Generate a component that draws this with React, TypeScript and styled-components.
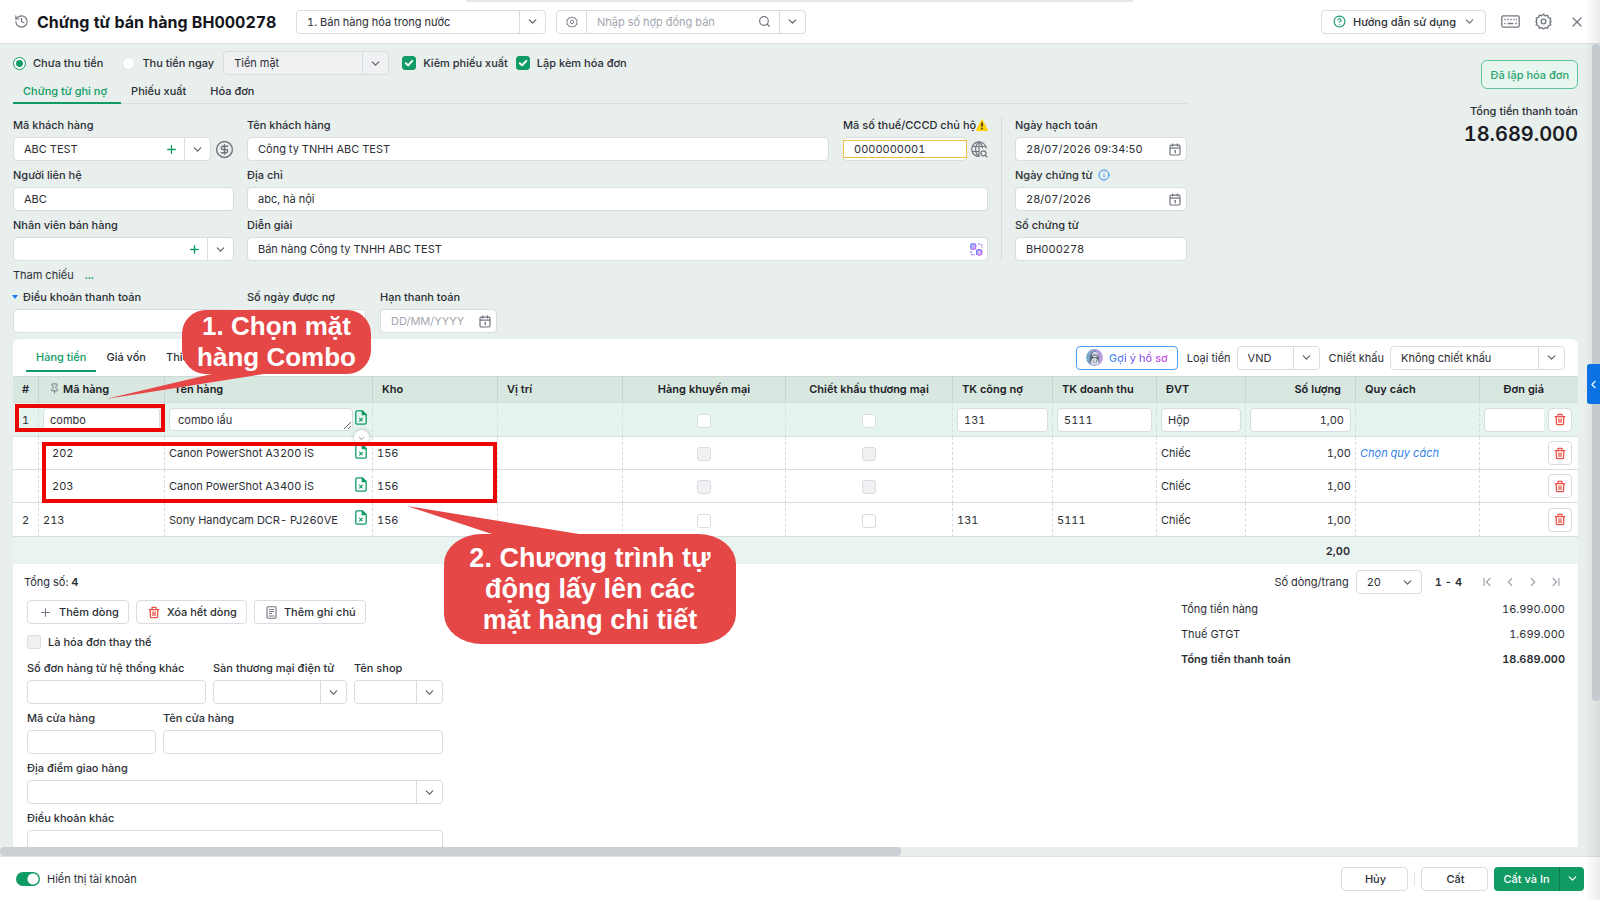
import React from 'react';
import styled, { createGlobalStyle, css } from 'styled-components';
import {
  ChevronDown,
  ChevronFirst,
  ChevronLast,
  ChevronLeft,
  ChevronRight,
  CircleDollarSign,
  CircleHelp,
  History,
  Info,
  Pin,
  Plus,
  Search,
  X,
} from 'lucide-react';

const GREEN = '#0f9b63';
const LINE = '#d9dce0';
const GREY = '#70757f';

const GlobalStyle = createGlobalStyle`
  * { box-sizing: border-box; }
  body {
    margin: 0;
    overflow: hidden;
    font-family: Inter, "Liberation Sans", sans-serif;
    font-size: 11px;
    line-height: 16px;
    color: #2b2e35;
    font-variant-numeric: tabular-nums;
  }
  button, input, select, textarea {
    font: inherit;
    font-variant-numeric: inherit;
    color: inherit;
    margin: 0;
  }
  button { cursor: pointer; }
  svg { display: block; flex: none; }
`;

/* ---------- page frame ---------- */

const Page = styled.div`
  position: relative;
  display: flex;
  flex-direction: column;
  height: 100vh;
  background: #e8efec;
`;

const Header = styled.header`
  display: flex;
  align-items: center;
  height: 44px;
  flex: none;
  padding: 0 15px 0 14px;
  background: #fff;
  border-bottom: 1px solid #dde2e1;
`;

const Title = styled.h1`
  margin: 0 17px 0 8px;
  min-width: 242px;
  font-size: 16px;
  line-height: 24px;
  font-weight: 700;
  color: #14171d;
  white-space: nowrap;
`;

const HeaderTools = styled.div`
  display: flex;
  align-items: center;
  gap: 15px;
  margin-left: auto;
`;

const IconButton = styled.button<{ $color?: string }>`
  display: flex;
  align-items: center;
  justify-content: center;
  padding: 0;
  border: 0;
  background: none;
  color: ${(p) => p.$color || GREY};
`;

const Body = styled.main`
  flex: 1;
  min-height: 0;
  overflow: hidden;
  padding: 7px 22px 0 13px;
  display: flex;
  flex-direction: column;
  margin-bottom: 9px;
`;

const Footer = styled.footer`
  display: flex;
  align-items: center;
  flex: none;
  height: 44px;
  padding: 0 16px;
  background: #fff;
  border-top: 1px solid #dde2e1;
`;

const TopArea = styled.div`
  display: flex;
  justify-content: space-between;
  flex: none;
`;

const FormArea = styled.div`
  flex: 0 1 1174px;
`;

const Summary = styled.div`
  display: flex;
  flex-direction: column;
  align-items: flex-end;
  padding-top: 9px;
`;

const StatusBadge = styled.button`
  height: 29px;
  padding: 0 8px;
  border: 1px solid #5cc596;
  border-radius: 6px;
  background: #e8f6ef;
  color: #2aa56f;
  font-weight: 500;
`;

const SummaryLabel = styled.div`
  margin-top: 14px;
  font-weight: 500;
`;

const SummaryAmount = styled.div`
  margin-top: 1px;
  font-size: 20px;
  line-height: 28px;
  font-weight: 600;
  color: #1a1d24;
`;

/* ---------- form controls ---------- */

const Control = styled.div<{ $w?: number; $muted?: boolean }>`
  display: flex;
  align-items: stretch;
  height: 24px;
  ${(p) => (p.$w ? css`width: ${p.$w}px; flex: none;` : css`flex: 1; min-width: 0;`)}
  border: 1px solid ${LINE};
  border-radius: 4px;
  background: ${(p) => (p.$muted ? '#f0f1f2' : '#fff')};
  overflow: hidden;
`;

const TextInput = styled.input`
  flex: 1;
  width: 0;
  min-width: 0;
  padding: 0 0 0 10px;
  border: 0;
  background: transparent;
  outline: none;
  &::placeholder { color: #a3a7af; opacity: 1; }
`;

const NativeSelect = styled.select`
  flex: 1;
  width: 0;
  min-width: 0;
  padding: 0 10px;
  border: 0;
  appearance: none;
  background: transparent;
  outline: none;
`;

const Arrow = styled.span<{ $plain?: boolean }>`
  display: flex;
  align-items: center;
  justify-content: center;
  width: 26px;
  flex: none;
  color: #5f646d;
  border-left: ${(p) => (p.$plain ? '0' : `1px solid ${LINE}`)};
`;

const Leading = styled(IconButton)`
  width: 30px;
  border-right: 1px solid ${LINE};
`;

const Inner = styled(IconButton)<{ $w?: number }>`
  width: ${(p) => p.$w || 22}px;
  flex: none;
`;

const WarnFrame = styled.div`
  display: flex;
  align-items: center;
  width: 124px;
  height: 24px;
  border: 1px solid ${LINE};
  border-radius: 4px;
  background: #fff;
  & > input {
    height: 18px;
    margin: 0 -1px;
    border: 1px solid #f3c14b;
  }
`;

const FieldBox = styled.div<{ $w?: number }>`
  ${(p) => (p.$w ? css`width: ${p.$w}px; flex: none;` : css`flex: 1; min-width: 0;`)}
`;

const LabelRow = styled.div`
  display: flex;
  align-items: center;
  gap: 5px;
  height: 16px;
  margin-bottom: 4px;
  white-space: nowrap;
  font-weight: 500;
`;

const ControlRow = styled.div`
  display: flex;
  align-items: center;
  gap: 4px;
`;

const FieldRow = styled.div<{ $gap?: number }>`
  display: flex;
  gap: ${(p) => p.$gap || 14}px;
`;

const Stack = styled.div<{ $w?: number }>`
  display: flex;
  flex-direction: column;
  gap: 6px;
  ${(p) => (p.$w ? css`width: ${p.$w}px; flex: none;` : css`flex: 1; min-width: 0;`)}
`;

const FormColumns = styled.div`
  display: flex;
  gap: 13px;
  padding-top: 13px;
`;

const Rule = styled.div`
  width: 1px;
  background: ${LINE};
`;

const Options = styled.div`
  display: flex;
  align-items: center;
  height: 24px;
`;

const Choice = styled.label<{ $mr?: number }>`
  display: flex;
  align-items: center;
  gap: 7px;
  margin-right: ${(p) => p.$mr || 0}px;
  font-weight: 500;
  white-space: nowrap;
`;

const Radio = styled.input.attrs({ type: 'radio' })`
  appearance: none;
  width: 13px;
  height: 13px;
  border-radius: 50%;
  border: 1px solid #e0e3e5;
  background: #fff;
  &:checked {
    border-color: ${GREEN};
    background: radial-gradient(circle, ${GREEN} 0 3px, #fff 4px);
  }
`;

const tick =
  "url(\"data:image/svg+xml,%3Csvg xmlns='http://www.w3.org/2000/svg' viewBox='0 0 14 14' fill='none' stroke='white' stroke-width='2' stroke-linecap='round' stroke-linejoin='round'%3E%3Cpath d='M3.8 7.2l2.3 2.2 4.2-4.5'/%3E%3C/svg%3E\")";

const Check = styled.input.attrs({ type: 'checkbox' })`
  appearance: none;
  display: inline-block;
  vertical-align: middle;
  width: 14px;
  height: 14px;
  border-radius: 3px;
  border: 1px solid ${LINE};
  background: #fff;
  &:disabled { background: #f0f1f3; }
  &:checked {
    border-color: ${GREEN};
    background: ${GREEN} ${tick} center / 14px no-repeat;
  }
`;

const LeadCheck = styled(Check)`
  margin-left: 13px;
`;

const TabBar = styled.div`
  display: flex;
  height: 24px;
  margin-top: 5px;
  border-bottom: 1px solid ${LINE};
`;

const Tab = styled.button<{ $active?: boolean }>`
  height: 24px;
  padding: 0 14px 0 10px;
  border: 0;
  border-bottom: 2px solid ${(p) => (p.$active ? GREEN : 'transparent')};
  background: none;
  font-weight: 500;
  color: ${(p) => (p.$active ? GREEN : 'inherit')};
`;

const Reference = styled.div`
  display: flex;
  gap: 11px;
  margin-top: 6px;
  a { color: ${GREEN}; font-weight: 700; text-decoration: none; }
`;

const Triangle = styled.span`
  margin-left: -1px;
  border: 3px solid transparent;
  border-top: 4px solid #1b7cf0;
  border-bottom: 0;
`;

/* ---------- detail panel ---------- */

const Panel = styled.section`
  flex: 1;
  min-height: 0;
  margin-top: 6px;
  border-radius: 6px 6px 0 0;
  background: #fff;
  overflow: hidden;
`;

const PanelBar = styled.div`
  display: flex;
  align-items: center;
  height: 37px;
  padding: 0 13px;
  font-weight: 400;
`;

const PanelTab = styled(Tab)`
  height: 28px;
  padding: 0 10px;
  align-self: flex-start;
  margin-top: 5px;
`;

const PanelTools = styled.div`
  display: flex;
  align-items: center;
  gap: 6px;
  margin-left: auto;
  label { margin-left: 3px; }
`;

const HintButton = styled.button`
  display: flex;
  align-items: center;
  gap: 6px;
  height: 24px;
  padding: 0 9px;
  border: 1px solid #4f9df5;
  border-radius: 4px;
  background: #fff;
  font-weight: 500;
  span {
    background: linear-gradient(90deg, #3a8cf2, #8a5cf0 55%, #d63ce6);
    -webkit-background-clip: text;
    background-clip: text;
    color: transparent;
  }
`;

const Grid = styled.table`
  width: 100%;
  table-layout: fixed;
  border-collapse: separate;
  border-spacing: 0;
`;

const Th = styled.th<{ $align?: string; $open?: boolean; $pad?: number }>`
  height: 27px;
  padding: 0 ${(p) => p.$pad ?? 9}px 2px 9px;
  border-top: 1px solid #cfdad6;
  border-bottom: 1px solid #d3dad8;
  border-right: ${(p) => (p.$open ? '0' : '1px solid #c9d3d0')};
  background: #d8e7e0;
  color: #1d2026;
  font-weight: 600;
  text-align: ${(p) => p.$align || 'left'};
  white-space: nowrap;
`;

const Pinned = styled.span`
  display: flex;
  align-items: center;
  gap: 3px;
  padding-left: 1px;
`;

const Td = styled.td<{ $align?: string; $indent?: boolean; $open?: boolean; $flush?: boolean }>`
  padding: 0 ${(p) => (p.$flush ? 0 : 4)}px 0 ${(p) => (p.$indent ? 13 : 4)}px;
  border-bottom: 1px solid ${LINE};
  border-right: ${(p) => (p.$open ? '0' : `1px dashed ${LINE}`)};
  text-align: ${(p) => p.$align || 'left'};
  white-space: nowrap;
`;

const Tr = styled.tr<{ $active?: boolean; $child?: boolean }>`
  height: ${(p) => (p.$child ? 33 : 34)}px;
  background: ${(p) => (p.$active ? '#e5f4ee' : '#fff')};
`;

const FootTd = styled.td`
  height: 27px;
  padding: 0 6px;
  background: #e9f3ef;
  font-weight: 600;
  text-align: right;
`;

const CellInput = styled.input<{ $right?: boolean; $cut?: boolean }>`
  display: block;
  width: 100%;
  height: 24px;
  padding: 0 6px;
  border: 1px solid ${LINE};
  border-radius: ${(p) => (p.$cut ? '4px 0 0 4px' : '4px')};
  border-right-width: ${(p) => (p.$cut ? 0 : 1)}px;
  background: #fff;
  text-align: ${(p) => (p.$right ? 'right' : 'left')};
`;

const NameCell = styled.div`
  display: flex;
  align-items: center;
  justify-content: space-between;
  gap: 2px;
  position: relative;
`;

const CellArea = styled.textarea`
  flex: 1;
  min-width: 0;
  height: 23px;
  padding: 3px 8px;
  border: 1px solid ${LINE};
  border-radius: 4px;
  background: #fff;
  resize: vertical;
  overflow: hidden;
`;

const Expander = styled.button`
  position: absolute;
  right: -1px;
  top: 22px;
  display: flex;
  justify-content: center;
  width: 15px;
  height: 15px;
  padding: 4px 0 0;
  border: 0;
  border-radius: 50%;
  background: #fff;
  color: ${GREY};
  box-shadow: 0 0 4px rgba(0, 0, 0, 0.25);
`;

const FileButton = styled(IconButton)`
  color: ${GREEN};
  margin: 0 1px 4px 0;
`;

const DeleteButton = styled(IconButton)`
  width: 24px;
  height: 24px;
  border: 1px solid ${LINE};
  border-radius: 4px;
  background: #fff;
  color: #ee5248;
`;

const SpecLink = styled.a`
  color: #2f80ed;
  font-style: italic;
  text-decoration: none;
`;

const Paging = styled.div`
  display: flex;
  align-items: center;
  gap: 7px;
  height: 36px;
  padding: 0 14px 0 11px;
  b { font-weight: 600; }
`;

const Spacer = styled.div`
  flex: 1;
`;

const PageRange = styled.b`
  margin: 0 10px 0 6px;
`;

const PageButton = styled(IconButton)`
  width: 16px;
  color: #a0a4ac;
`;

const Bottom = styled.div`
  display: flex;
  justify-content: space-between;
  padding: 0 13px 0 14px;
`;

const Actions = styled.div`
  display: flex;
  gap: 7px;
`;

const Button = styled.button<{ $w?: number }>`
  display: flex;
  align-items: center;
  justify-content: center;
  gap: 7px;
  height: 24px;
  padding: 0 9px 0 11px;
  min-width: ${(p) => p.$w || 0}px;
  border: 1px solid ${LINE};
  border-radius: 4px;
  background: #fff;
  font-weight: 500;
  white-space: nowrap;
  color: #2b2e35;
  svg { color: ${GREY}; }
`;

const RedIcon = styled.span`
  && svg { color: #ee5248; }
`;

const ReplaceRow = styled.div`
  display: flex;
  margin: 1px 0;
  height: 22px;
`;

const Totals = styled.dl`
  flex: 0 1 384px;
  margin: -4px 0 0;
`;

const TotalRow = styled.div<{ $strong?: boolean }>`
  display: flex;
  justify-content: space-between;
  align-items: center;
  height: 25px;
  font-weight: ${(p) => (p.$strong ? 600 : 400)};
  dd { margin: 0; }
`;

/* ---------- footer ---------- */

const FooterChoice = styled(Choice)`
  font-weight: 400;
`;

const Switch = styled.input.attrs({ type: 'checkbox', role: 'switch' })`
  appearance: none;
  width: 24px;
  height: 14px;
  border-radius: 7px;
  background: radial-gradient(circle at 17px 7px, #fff 0 5px, ${GREEN} 6px);
`;

const FooterActions = styled.div`
  display: flex;
  align-items: center;
  gap: 6px;
  margin-left: auto;
`;

const ShortRule = styled.span`
  width: 1px;
  height: 14px;
  background: #e2e4e7;
`;

const SplitButton = styled.div`
  display: flex;
  height: 24px;
  border-radius: 4px;
  background: ${GREEN};
  overflow: hidden;
  button {
    display: flex;
    align-items: center;
    justify-content: center;
    padding: 0;
    border: 0;
    background: none;
    color: #fff;
    font-weight: 500;
    min-width: 65px;
  }
  button + button {
    min-width: 25px;
    border-left: 1px solid #0c7d50;
  }
`;

/* ---------- overlays ---------- */

const VScroll = styled.div`
  position: absolute;
  right: 0;
  top: 44px;
  width: 8px;
  height: 73%;
  border-radius: 4px;
  background: #c5cace;
`;

const HScroll = styled.div`
  position: absolute;
  left: 0;
  bottom: 44px;
  width: 56.3%;
  height: 9px;
  border-radius: 4px;
  background: #cbd0d5;
`;

const EdgeShade = styled.div`
  position: absolute;
  inset: 0 0 0 auto;
  width: 16px;
  background: linear-gradient(90deg, rgba(0, 0, 0, 0), rgba(0, 0, 0, 0.07));
  pointer-events: none;
`;

const TopStrip = styled.div`
  position: absolute;
  top: 0;
  left: 466px;
  width: 667px;
  height: 2px;
  background: #e6e7e8;
`;

const SideHandle = styled.button`
  position: absolute;
  right: 0;
  top: 364px;
  display: flex;
  align-items: center;
  justify-content: center;
  width: 13px;
  height: 40px;
  padding: 0;
  border: 0;
  border-radius: 3px 0 0 3px;
  background: #0b72e3;
  color: #fff;
`;

const Mark = styled.div<{ $x: number; $y: number; $w: number; $h: number }>`
  position: absolute;
  left: ${(p) => p.$x}px;
  top: ${(p) => p.$y}px;
  width: ${(p) => p.$w}px;
  height: ${(p) => p.$h}px;
  border: 4px solid #eb0505;
  pointer-events: none;
`;

const Callout = styled.div<{ $x: number; $y: number; $w: number; $h: number; $r: string; $size: number }>`
  position: absolute;
  left: ${(p) => p.$x}px;
  top: ${(p) => p.$y}px;
  width: ${(p) => p.$w}px;
  height: ${(p) => p.$h}px;
  display: flex;
  align-items: center;
  justify-content: center;
  border-radius: ${(p) => p.$r};
  background: #e54646;
  color: #fff;
  font: bold ${(p) => p.$size}px/31px "Liberation Sans", Arial, sans-serif;
  text-align: center;
  white-space: nowrap;
`;

const Tail = styled.svg<{ $x: number; $y: number }>`
  position: absolute;
  left: ${(p) => p.$x}px;
  top: ${(p) => p.$y}px;
  fill: #e54646;
`;

/* ---------- icons ---------- */

const Down = () => <ChevronDown size={13} strokeWidth={2.4} />;

const CalendarIcon = () => (
  <svg width="12" height="13" viewBox="0 0 12 13" fill="none" stroke="currentColor" strokeWidth="1.2">
    <rect x="1" y="2.2" width="10" height="9.8" rx="1.2" />
    <path d="M1 5.2h10M3.6.6v3M8.4.6v3M5.3 7.6h1v2.6" />
  </svg>
);

const TrashIcon = () => (
  <svg width="12" height="13" viewBox="0 0 12 13" fill="none" stroke="currentColor" strokeWidth="1.3" strokeLinecap="round" strokeLinejoin="round">
    <path d="M1.2 3.6h9.600M4 3.400V1.400h4v2M2.200 3.800l.3 6.900a1 1 0 0 0 1 1h5a1 1 0 0 0 1-1l.3-6.900" />
    <path d="M5 5.800v3.600M7 5.800v3.600" />
  </svg>
);

const FileIcon = () => (
  <svg width="12" height="15" viewBox="0 0 12 15" fill="none" stroke="currentColor" strokeWidth="1.3" strokeLinejoin="round">
    <path d="M2.200.9h5.200l3.800 3.700v8.100a1.400 1.400 0 0 1-1.400 1.400H2.200A1.400 1.400 0 0 1 .8 12.700V2.300A1.400 1.400 0 0 1 2.200.9z" />
    <path d="M7.300 1v3.700h3.700z" fill="currentColor" />
    <path d="M4.200 7.800l3.200 3.400M7.600 7.800l-3.400 3.600" strokeWidth="1.1" />
  </svg>
);

const GearIcon = ({ size }: { size: number }) => (
  <svg width={size} height={size} viewBox="0 0 18 18" fill="none" stroke="currentColor" strokeWidth="1.4" strokeLinejoin="round">
    <path d="M9 1.2l1.900 1.900 2.500-.7.8 2.600 2.500.8-.7 2.500L17 9l-1.200 1.300.9 2.300-2.600.9-.8 2.600-2.400-.7L9 16.900l-1.900-1.500-2.500.7-.8-2.600-2.500-.9.7-2.300L1 9l1-1.300-.7-2.200 2.500-.8.8-2.500 2.500.7z" />
    <circle cx="9" cy="9" r="2.5" />
  </svg>
);

const KeyboardIcon = () => (
  <svg width="19" height="13" viewBox="0 0 19 13" fill="none" stroke="currentColor" strokeWidth="1.3">
    <rect x=".8" y=".8" width="17.4" height="11.4" rx="1.5" />
    <path d="M3.300 4.500h1.300M6.300 4.500h1.300M9.300 4.500h1.300M12.300 4.500h1.300M15 4.500h1M3.300 8.500h1.300M6.700 8.500h5.600M14.300 8.500h1.500" />
  </svg>
);

const GlobeSearchIcon = () => (
  <svg width="17" height="17" viewBox="0 0 17 17" fill="none" stroke="currentColor" strokeWidth="1.2">
    <path d="M8.500 15.500A7.300 7.300 0 1 1 15.300 7.500M.9 5.500h14M.9 10.500h7.500" />
    <path d="M8 15.400C3.500 12 3.500 4.500 8 .9c2.200 1.600 3.400 4 3.500 6.600M8 .9v14.500" />
    <circle cx="12.5" cy="12.3" r="2.5" />
    <path d="M14.300 14.200l2.200 2.200" />
  </svg>
);

const WarningIcon = () => (
  <svg width="12" height="12" viewBox="0 0 12 12">
    <path d="M6 .5L11.700 11.500H.3z" fill="#fdd10a" stroke="#fdd10a" strokeLinejoin="round" />
    <path d="M6 3.600v4M6 8.800v1.400" stroke="#222" strokeWidth="1.5" />
  </svg>
);

const TranslateIcon = () => (
  <svg width="13" height="13" viewBox="0 0 13 13" fill="none" strokeWidth="1.1">
    <defs>
      <linearGradient id="tr" x1="0" y1="0" x2="1" y2="1">
        <stop offset="0" stopColor="#4a7df5" />
        <stop offset="1" stopColor="#cf56ee" />
      </linearGradient>
    </defs>
    <g stroke="url(#tr)">
      <rect x=".8" y=".8" width="5" height="5.4" rx="1.2" fill="#b7b4f8" />
      <circle cx="9.2" cy="9.4" r="2.8" fill="#d9b8f7" />
      <path d="M8 1h1.500A2.500 2.500 0 0 1 12 3.500V5M1 8v1.500A2.500 2.500 0 0 0 3.500 12H5" strokeDasharray="2 1" />
    </g>
  </svg>
);

const NoteIcon = () => (
  <svg width="11" height="13" viewBox="0 0 11 13" fill="none" stroke="currentColor" strokeWidth="1.1">
    <rect x="1" y=".8" width="9" height="11.4" rx="1" />
    <path d="M3 3.500h5M3 5.500h5M3 7.500h3M2.500 10h6" />
  </svg>
);

const AvatarIcon = () => (
  <svg width="17" height="17" viewBox="0 0 17 17">
    <defs>
      <linearGradient id="av" x1="0" x2="1">
        <stop offset="0" stopColor="#6fa9c9" />
        <stop offset="1" stopColor="#c79be0" />
      </linearGradient>
    </defs>
    <circle cx="8.5" cy="8.5" r="8.4" fill="url(#av)" />
    <path d="M3.500 13.500C4 9 3.500 3.500 8.500 2.200c4.500 1 4 6 4.800 11-2.500 3-7.300 3-9.800.3z" fill="#5c6675" />
    <ellipse cx="9" cy="5.600" rx="2.800" ry="2.700" fill="#e6eaf0" />
    <path d="M7 6h4.200" stroke="#39435a" strokeWidth="1" />
    <path d="M4.500 14.500c.3-4 2-5.500 4-5.500s4 1.500 4.500 5.500c-2.300 2-6.200 2-8.500 0z" fill="#d3dae3" />
    <path d="M7 11.500l1.500 2.500M11 10.500l-.8 3" stroke="#6b7585" strokeWidth=".8" />
  </svg>
);

/* ---------- composed parts ---------- */

interface FieldProps {
  id: string;
  label: React.ReactNode;
  w?: number;
  after?: React.ReactNode;
  before?: React.ReactNode;
  aside?: React.ReactNode;
  children: React.ReactNode;
}

const Field = ({ id, label, w, before, after, aside, children }: FieldProps) => (
  <FieldBox $w={w}>
    <LabelRow>
      {before}
      <label htmlFor={id}>{label}</label>
      {after}
    </LabelRow>
    <ControlRow>
      {children}
      {aside}
    </ControlRow>
  </FieldBox>
);

const Text = ({ id, value = '', children }: { id: string; value?: string; children?: React.ReactNode }) => (
  <Control>
    <TextInput id={id} defaultValue={value} />
    {children}
  </Control>
);

const Dropdown = (p: { id: string; value?: string; w?: number; muted?: boolean; plain?: boolean; label?: string }) => (
  <Control $w={p.w} $muted={p.muted}>
    <NativeSelect id={p.id} aria-label={p.label}>
      <option>{p.value}</option>
    </NativeSelect>
    <Arrow $plain={p.plain}>
      <Down />
    </Arrow>
  </Control>
);

const DateField = ({ id, value, placeholder }: { id: string; value?: string; placeholder?: string }) => (
  <Control>
    <TextInput id={id} defaultValue={value} placeholder={placeholder} />
    <Inner aria-label="Chọn ngày">
      <CalendarIcon />
    </Inner>
  </Control>
);

const AddCombo = ({ id, value }: { id: string; value?: string }) => (
  <Text id={id} value={value}>
    <Inner $w={26} $color={GREEN} aria-label="Thêm">
      <Plus size={13} strokeWidth={2.4} />
    </Inner>
    <Arrow>
      <Down />
    </Arrow>
  </Text>
);

interface Item {
  no?: string;
  code: string;
  name: string;
  store?: string;
  receivable?: string;
  revenue?: string;
  unit: string;
  qty: string;
  spec?: string;
  child?: boolean;
  active?: boolean;
}

const items: Item[] = [
  { no: '1', code: 'combo', name: 'combo lẩu', receivable: '131', revenue: '5111', unit: 'Hộp', qty: '1,00', active: true },
  { code: '202', name: 'Canon PowerShot A3200 iS', store: '156', unit: 'Chiếc', qty: '1,00', spec: 'Chọn quy cách', child: true },
  { code: '203', name: 'Canon PowerShot A3400 iS', store: '156', unit: 'Chiếc', qty: '1,00', child: true },
  { no: '2', code: '213', name: 'Sony Handycam DCR- PJ260VE', store: '156', receivable: '131', revenue: '5111', unit: 'Chiếc', qty: '1,00' },
];

const columnWidths = [26, 126, 208, 125, 125, 163, 167, 100, 104, 89, 110, 124, 0, 34];

const Row = ({ item }: { item: Item }) => {
  const edit = item.active;
  const cell = (label: string, value?: string, right?: boolean) =>
    edit ? <CellInput aria-label={label} defaultValue={value} $right={right} /> : value;
  return (
    <Tr $active={edit} $child={item.child}>
      <Td $align="center">{item.no}</Td>
      <Td $indent={item.child}>{cell('Mã hàng', item.code)}</Td>
      <Td>
        <NameCell>
          {edit ? <CellArea aria-label="Tên hàng" rows={1} defaultValue={item.name} /> : <span>{item.name}</span>}
          <FileButton aria-label="Chi tiết hàng">
            <FileIcon />
          </FileButton>
          {edit && (
            <Expander aria-label="Mở rộng">
              <ChevronDown size={9} />
            </Expander>
          )}
        </NameCell>
      </Td>
      <Td>{item.store}</Td>
      <Td />
      <Td $align="center">
        <Check aria-label="Hàng khuyến mại" disabled={item.child} />
      </Td>
      <Td $align="center">
        <Check aria-label="Chiết khấu thương mại" disabled={item.child} />
      </Td>
      <Td>{cell('TK công nợ', item.receivable)}</Td>
      <Td>{cell('TK doanh thu', item.revenue)}</Td>
      <Td>{cell('ĐVT', item.unit)}</Td>
      <Td $align="right">{cell('Số lượng', item.qty, true)}</Td>
      <Td>{item.spec && <SpecLink href="#spec">{item.spec}</SpecLink>}</Td>
      <Td $open $flush>
        {edit && <CellInput aria-label="Đơn giá" $cut />}
      </Td>
      <Td $open>
        <DeleteButton aria-label="Xóa dòng">
          <TrashIcon />
        </DeleteButton>
      </Td>
    </Tr>
  );
};

const Contract = styled(Control).attrs({ $w: 250 })`
  margin-left: 10px;
`;

const CloseButton = styled(IconButton)`
  margin-left: 2px;
`;

const HeaderBar = () => (
  <Header>
    <IconButton aria-label="Lịch sử">
      <History size={15} strokeWidth={1.8} />
    </IconButton>
    <Title>Chứng từ bán hàng BH000278</Title>
    <Dropdown id="kind" label="Loại chứng từ" value="1. Bán hàng hóa trong nước" w={250} />
    <Contract>
      <Leading aria-label="Thiết lập hợp đồng">
        <GearIcon size={12} />
      </Leading>
      <TextInput aria-label="Số hợp đồng bán" placeholder="Nhập số hợp đồng bán" />
      <Inner $w={30} aria-label="Tìm">
        <Search size={13} strokeWidth={2.2} />
      </Inner>
      <Arrow>
        <Down />
      </Arrow>
    </Contract>
    <HeaderTools>
      <Button $w={163}>
        <CircleHelp size={13} color={GREEN} />
        Hướng dẫn sử dụng
        <Down />
      </Button>
      <IconButton aria-label="Bàn phím">
        <KeyboardIcon />
      </IconButton>
      <IconButton aria-label="Thiết lập">
        <GearIcon size={17} />
      </IconButton>
      <CloseButton aria-label="Đóng">
        <X size={16} strokeWidth={1.8} />
      </CloseButton>
    </HeaderTools>
  </Header>
);

const TaxLabel = styled.span`
  display: flex;
  align-items: center;
`;

const CustomerForm = () => (
  <FormColumns>
    <Stack $w={221}>
      <Field
        id="customer"
        label="Mã khách hàng"
        aside={
          <IconButton aria-label="Công nợ">
            <CircleDollarSign size={19} strokeWidth={1.8} />
          </IconButton>
        }
      >
        <AddCombo id="customer" value="ABC TEST" />
      </Field>
      <Field id="contact" label="Người liên hệ">
        <Text id="contact" value="ABC" />
      </Field>
      <Field id="seller" label="Nhân viên bán hàng">
        <AddCombo id="seller" />
      </Field>
    </Stack>
    <Stack>
      <FieldRow>
        <Field id="name" label="Tên khách hàng">
          <Text id="name" value="Công ty TNHH ABC TEST" />
        </Field>
        <Field
          id="tax"
          w={145}
          label={
            <TaxLabel>
              Mã số thuế/CCCD chủ hộ
              <WarningIcon />
            </TaxLabel>
          }
          aside={
            <IconButton aria-label="Tra cứu mã số thuế">
              <GlobeSearchIcon />
            </IconButton>
          }
        >
          <WarnFrame>
            <TextInput id="tax" defaultValue="0000000001" />
          </WarnFrame>
        </Field>
      </FieldRow>
      <Field id="address" label="Địa chỉ">
        <Text id="address" value="abc, hà nội" />
      </Field>
      <Field id="note" label="Diễn giải">
        <Text id="note" value="Bán hàng Công ty TNHH ABC TEST">
          <Inner aria-label="Gợi ý diễn giải">
            <TranslateIcon />
          </Inner>
        </Text>
      </Field>
    </Stack>
    <Rule />
    <Stack $w={172}>
      <Field id="posted" label="Ngày hạch toán">
        <DateField id="posted" value="28/07/2026 09:34:50" />
      </Field>
      <Field id="issued" label="Ngày chứng từ" after={<Info size={12} color="#2f8df0" />}>
        <DateField id="issued" value="28/07/2026" />
      </Field>
      <Field id="number" label="Số chứng từ">
        <Text id="number" value="BH000278" />
      </Field>
    </Stack>
  </FormColumns>
);

const PaymentRow = styled(FieldRow)`
  margin-top: 6px;
`;

const App = () => (
  <Page>
    <GlobalStyle />
    <HeaderBar />
    <Body>
      <TopArea>
        <FormArea>
          <Options>
            <Choice $mr={19}>
              <Radio name="paid" defaultChecked />
              Chưa thu tiền
            </Choice>
            <Choice $mr={9}>
              <Radio name="paid" />
              Thu tiền ngay
            </Choice>
            <Dropdown id="cash" label="Hình thức" value="Tiền mặt" w={166} muted />
            <Choice $mr={8}>
              <LeadCheck defaultChecked />
              Kiêm phiếu xuất
            </Choice>
            <Choice>
              <Check defaultChecked />
              Lập kèm hóa đơn
            </Choice>
          </Options>
          <TabBar>
            <Tab $active>Chứng từ ghi nợ</Tab>
            <Tab>Phiếu xuất</Tab>
            <Tab>Hóa đơn</Tab>
          </TabBar>
          <CustomerForm />
          <Reference>
            Tham chiếu <a href="#ref">...</a>
          </Reference>
          <PaymentRow>
            <Field id="terms" w={220} before={<Triangle />} label="Điều khoản thanh toán">
              <Dropdown id="terms" />
            </Field>
            <Field id="days" w={119} label="Số ngày được nợ">
              <Text id="days" />
            </Field>
            <Field id="due" w={117} label="Hạn thanh toán">
              <DateField id="due" placeholder="DD/MM/YYYY" />
            </Field>
          </PaymentRow>
        </FormArea>
        <Summary>
          <StatusBadge>Đã lập hóa đơn</StatusBadge>
          <SummaryLabel>Tổng tiền thanh toán</SummaryLabel>
          <SummaryAmount>18.689.000</SummaryAmount>
        </Summary>
      </TopArea>

      <Panel>
        <PanelBar>
          <PanelTab $active>Hàng tiền</PanelTab>
          <PanelTab>Giá vốn</PanelTab>
          <PanelTab>Thiế</PanelTab>
          <PanelTools>
            <HintButton>
              <AvatarIcon />
              <span>Gợi ý hồ sơ</span>
            </HintButton>
            <label htmlFor="currency">Loại tiền</label>
            <Dropdown id="currency" value="VND" w={83} />
            <label htmlFor="discount">Chiết khấu</label>
            <Dropdown id="discount" value="Không chiết khấu" w={175} />
          </PanelTools>
        </PanelBar>
        <Grid>
          <colgroup>
            {columnWidths.map((w, i) => (
              <col key={i} width={w || undefined} />
            ))}
          </colgroup>
          <thead>
            <tr>
              <Th $align="center">#</Th>
              <Th>
                <Pinned>
                  <Pin size={11} color={GREY} />
                  Mã hàng
                </Pinned>
              </Th>
              <Th>Tên hàng</Th>
              <Th>Kho</Th>
              <Th>Vị trí</Th>
              <Th $align="center">Hàng khuyến mại</Th>
              <Th $align="center">Chiết khấu thương mại</Th>
              <Th>TK công nợ</Th>
              <Th>TK doanh thu</Th>
              <Th>ĐVT</Th>
              <Th $align="right" $pad={14}>Số lượng</Th>
              <Th>Quy cách</Th>
              <Th $align="right" $open $pad={0}>Đơn giá</Th>
              <Th $open />
            </tr>
          </thead>
          <tbody>
            {items.map((item) => (
              <Row key={item.code} item={item} />
            ))}
          </tbody>
          <tfoot>
            <tr>
              <FootTd colSpan={11}>2,00</FootTd>
              <FootTd colSpan={3} />
            </tr>
          </tfoot>
        </Grid>
        <Paging>
          <span>
            Tổng số: <b>4</b>
          </span>
          <Spacer />
          <label htmlFor="size">Số dòng/trang</label>
          <Dropdown id="size" value="20" w={66} plain />
          <PageRange>1 - 4</PageRange>
          <PageButton aria-label="Trang đầu"><ChevronFirst size={14} /></PageButton>
          <PageButton aria-label="Trang trước"><ChevronLeft size={14} /></PageButton>
          <PageButton aria-label="Trang sau"><ChevronRight size={14} /></PageButton>
          <PageButton aria-label="Trang cuối"><ChevronLast size={14} /></PageButton>
        </Paging>
        <Bottom>
          <Stack $w={416}>
            <Actions>
              <Button>
                <Plus size={13} />
                Thêm dòng
              </Button>
              <Button>
                <RedIcon><TrashIcon /></RedIcon>
                Xóa hết dòng
              </Button>
              <Button>
                <NoteIcon />
                Thêm ghi chú
              </Button>
            </Actions>
            <ReplaceRow>
              <Choice>
                <Check disabled />
                Là hóa đơn thay thế
              </Choice>
            </ReplaceRow>
            <FieldRow $gap={7}>
              <Field id="order" w={179} label="Số đơn hàng từ hệ thống khác">
                <Text id="order" />
              </Field>
              <Field id="market" w={134} label="Sàn thương mại điện tử">
                <Dropdown id="market" />
              </Field>
              <Field id="shop" label="Tên shop">
                <Dropdown id="shop" />
              </Field>
            </FieldRow>
            <FieldRow $gap={7}>
              <Field id="storeCode" w={129} label="Mã cửa hàng">
                <Text id="storeCode" />
              </Field>
              <Field id="storeName" label="Tên cửa hàng">
                <Text id="storeName" />
              </Field>
            </FieldRow>
            <Field id="delivery" label="Địa điểm giao hàng">
              <Dropdown id="delivery" />
            </Field>
            <Field id="other" label="Điều khoản khác">
              <Text id="other" />
            </Field>
          </Stack>
          <Totals>
            <TotalRow><dt>Tổng tiền hàng</dt><dd>16.990.000</dd></TotalRow>
            <TotalRow><dt>Thuế GTGT</dt><dd>1.699.000</dd></TotalRow>
            <TotalRow $strong><dt>Tổng tiền thanh toán</dt><dd>18.689.000</dd></TotalRow>
          </Totals>
        </Bottom>
      </Panel>
    </Body>

    <Footer>
      <FooterChoice>
        <Switch defaultChecked />
        Hiển thị tài khoản
      </FooterChoice>
      <FooterActions>
        <Button $w={67}>Hủy</Button>
        <ShortRule />
        <Button $w={67}>Cất</Button>
        <SplitButton>
          <button>Cất và In</button>
          <button aria-label="Tùy chọn in"><Down /></button>
        </SplitButton>
      </FooterActions>
    </Footer>

    <EdgeShade />
    <VScroll />
    <HScroll />
    <TopStrip />
    <SideHandle aria-label="Mở bảng bên">
      <ChevronLeft size={13} />
    </SideHandle>

    <Mark $x={15} $y={404} $w={150} $h={28} />
    <Mark $x={42} $y={442} $w={455} $h={61} />
    <Tail $x={106} $y={372} width="164" height="28" viewBox="0 0 164 28">
      <path d="M0 27L110 1H164z" />
    </Tail>
    <Callout $x={182} $y={310} $w={189} $h={64} $r="24px" $size={26}>
      1. Chọn mặt
      <br />
      hàng Combo
    </Callout>
    <Tail $x={407} $y={506} width="184" height="30" viewBox="0 0 184 30">
      <path d="M0 0L184 30H91z" />
    </Tail>
    <Callout $x={444} $y={534} $w={292} $h={110} $r="38px / 30px" $size={27}>
      2. Chương trình tự
      <br />
      động lấy lên các
      <br />
      mặt hàng chi tiết
    </Callout>
  </Page>
);

export default App;
